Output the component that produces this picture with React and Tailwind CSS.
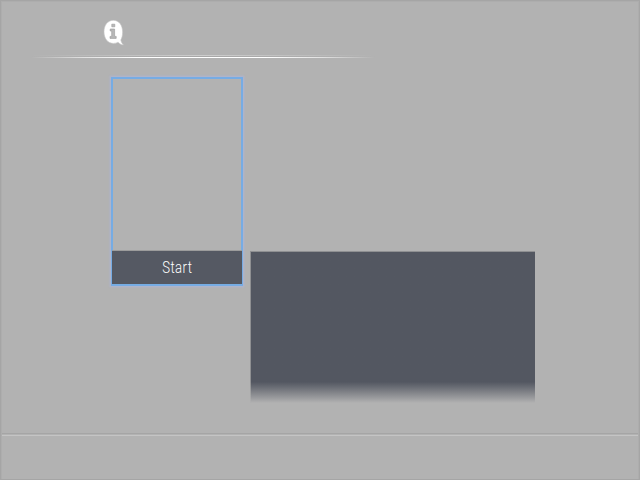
function InfoIcon() {
  return (
    <svg width="22" height="26" viewBox="0 0 22 26" className="block">
      <path
        d="M10.3 .3C4.700 .3 1 5.300 1 11.800s3.700 11.600 9.300 11.600c1.800 0 3.400-.4 4.800-1.200 1.200 1.500 2.900 2.400 5.300 2.800-1.300-1.400-2.200-2.900-2.600-5 1.200-2 1.800-4.700 1.800-7.900C19.600 5.300 16 .3 10.300 .3Z"
        fill="#fff"
        stroke="#c6c6c6"
        strokeWidth=".6"
      />
      <path d="M8.800 4.200h3v2.600h-3zM7.200 9h4.400v7.400h1.600v2H7v-2h1.700v-5.400H7.200z" fill="#b8b8b8" stroke="#999" strokeWidth=".6" />
    </svg>
  );
}

function Header() {
  return (
    <header className="h-[75px] pt-[18px]">
      <div className="ml-[101px] h-[35px]">
        <InfoIcon />
      </div>
      <div className="ml-[29px] w-[344px]">
        <div className="h-px bg-linear-to-r from-transparent via-[#cdcdcd] via-50% to-transparent" />
        <div className="h-px bg-linear-to-r from-transparent via-[#a8a8a8] via-50% to-transparent" />
        <div className="h-px bg-[linear-gradient(90deg,#fff0_0%,#ffffff99_15%,#fff_32%,#fff_68%,#ffffff99_85%,#fff0_100%)]" />
      </div>
    </header>
  );
}

export default function App() {
  return (
    <div className="h-[480px] w-[640px] overflow-hidden border border-[#a5a5a5] bg-[#b2b2b2]">
      <div className="flex h-full flex-col border-x border-t border-[#adadad]">
        <Header />
        <main className="flex h-[356px] items-start pl-[109px]">
          <div className="flex h-[209px] w-[132px] flex-col justify-end border-2 border-[#76ace4] shadow-[0_0_2px_1px_#aeb4d4]">
            <button className="-mx-px flex h-[34px] items-center justify-center border-t border-[#9c9c9c] bg-[#555963] font-['Roboto',sans-serif] text-[16px] leading-none font-light text-white">
              <span className="inline-block scale-x-[.82] tracking-[0.5px]">Start</span>
            </button>
          </div>
          <div className="mt-[174px] ml-[7px] h-[152px] w-[285px] border-t border-l bg-linear-to-b from-[#535761] from-86% to-[#b2b2b2] [border-image:linear-gradient(#8f9092_85%,#b2b2b2)_1]" />
        </main>
        <footer className="flex-1 border-t border-[#a5a5a5]">
          <div className="mt-px h-px bg-[#c4c4c4]" />
        </footer>
      </div>
    </div>
  );
}
